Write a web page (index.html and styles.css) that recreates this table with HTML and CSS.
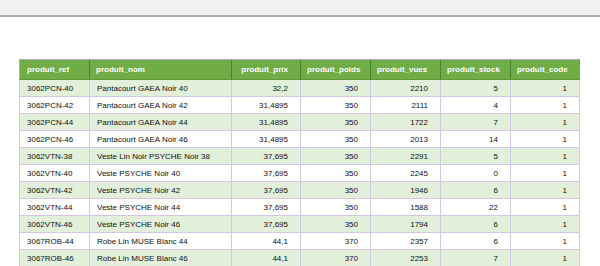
FILE: index.html
```html
<!DOCTYPE html>
<html>
<head>
<meta charset="utf-8">
<link rel="stylesheet" href="styles.css">
</head>
<body>
<div class="topbar"></div>
<div class="sheet">
<table class="grid">
<colgroup>
<col class="c-ref"><col class="c-nom"><col class="c-num"><col class="c-num2"><col class="c-num2"><col class="c-num2"><col class="c-num">
</colgroup>
<thead>
<tr><th>produit_ref</th><th>produit_nom</th><th class="r">produit_prix</th><th>produit_poids</th><th>produit_vues</th><th>produit_stock</th><th>produit_code</th></tr>
</thead>
<tbody>
<tr><td>3062PCN-40</td><td>Pantacourt GAEA Noir 40</td><td class="r">32,2</td><td class="r">350</td><td class="r">2210</td><td class="r">5</td><td class="r">1</td></tr>
<tr><td>3062PCN-42</td><td>Pantacourt GAEA Noir 42</td><td class="r">31,4895</td><td class="r">350</td><td class="r">2111</td><td class="r">4</td><td class="r">1</td></tr>
<tr><td>3062PCN-44</td><td>Pantacourt GAEA Noir 44</td><td class="r">31,4895</td><td class="r">350</td><td class="r">1722</td><td class="r">7</td><td class="r">1</td></tr>
<tr><td>3062PCN-46</td><td>Pantacourt GAEA Noir 46</td><td class="r">31,4895</td><td class="r">350</td><td class="r">2013</td><td class="r">14</td><td class="r">1</td></tr>
<tr><td>3062VTN-38</td><td>Veste Lin Noir PSYCHE Noir 38</td><td class="r">37,695</td><td class="r">350</td><td class="r">2291</td><td class="r">5</td><td class="r">1</td></tr>
<tr><td>3062VTN-40</td><td>Veste PSYCHE Noir 40</td><td class="r">37,695</td><td class="r">350</td><td class="r">2245</td><td class="r">0</td><td class="r">1</td></tr>
<tr><td>3062VTN-42</td><td>Veste PSYCHE Noir 42</td><td class="r">37,695</td><td class="r">350</td><td class="r">1946</td><td class="r">6</td><td class="r">1</td></tr>
<tr><td>3062VTN-44</td><td>Veste PSYCHE Noir 44</td><td class="r">37,695</td><td class="r">350</td><td class="r">1588</td><td class="r">22</td><td class="r">1</td></tr>
<tr><td>3062VTN-46</td><td>Veste PSYCHE Noir 46</td><td class="r">37,695</td><td class="r">350</td><td class="r">1794</td><td class="r">6</td><td class="r">1</td></tr>
<tr><td>3067ROB-44</td><td>Robe Lin MUSE Blanc 44</td><td class="r">44,1</td><td class="r">370</td><td class="r">2357</td><td class="r">6</td><td class="r">1</td></tr>
<tr><td>3067ROB-46</td><td>Robe Lin MUSE Blanc 46</td><td class="r">44,1</td><td class="r">370</td><td class="r">2253</td><td class="r">7</td><td class="r">1</td></tr>
</tbody>
</table>
</div>
</body>
</html>
```
FILE: styles.css
```css
html, body {
  margin: 0;
  padding: 0;
  background: #ffffff;
  overflow: hidden;
}
body {
  font-family: "Liberation Sans", Arial, sans-serif;
  color: #111111;
}
.topbar {
  height: 15px;
  background: #f2f2f2;
  border-bottom: 2px solid #acacac;
}
.sheet {
  padding: 42px 0 0 19px;
}
.grid {
  border-collapse: collapse;
  table-layout: fixed;
  width: 560px;
  font-size: 8px;
}
.c-ref { width: 70px; }
.c-nom { width: 142px; }
.c-num { width: 69px; }
.c-num2 { width: 70px; }
.grid th {
  background: #70ad47;
  color: #ffffff;
  font-weight: bold;
  text-align: left;
  height: 19px;
  padding: 0 6px;
  border-left: 1px solid #4f7f35;
  border-top: 1px solid #b9a7cc;
  border-bottom: 1px solid #5c9a35;
  white-space: nowrap;
}
.grid th:first-child { border-left: 1px solid #b9a7cc; padding-left: 7px; }
.grid th:last-child { border-right: 1px solid #70ad47; }
.grid th.r { text-align: right; padding-right: 12px; }
.grid td {
  height: 16px;
  padding: 0 6px 0 7px;
  border-left: 1px solid #d5c6e6;
  border-bottom: 1px solid #d5c6e6;
  white-space: nowrap;
}
.grid td:last-child { border-right: 1px solid #d5c6e6; }
.grid td.r { text-align: right; padding-right: 12px; }
.grid tbody tr:nth-child(odd) td { background: #e2efda; }
.grid tbody tr:nth-child(even) td { background: #ffffff; }
```
